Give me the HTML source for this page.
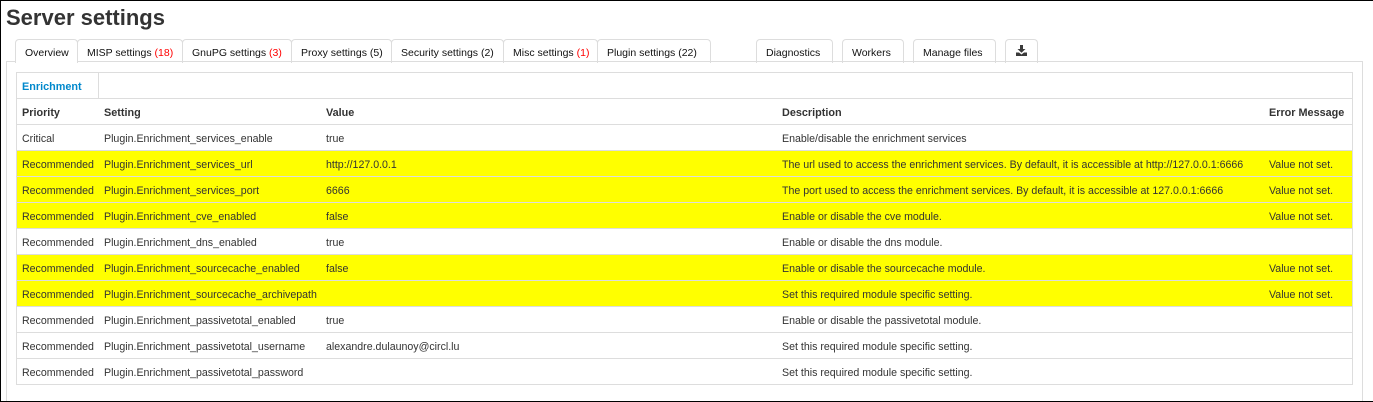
<!DOCTYPE html>
<html><head><meta charset="utf-8"><style>
html,body{margin:0;padding:0;background:#fff}
body{width:1373px;height:402px;position:relative;overflow:hidden;font-family:"Liberation Sans",sans-serif;font-size:10.62px;color:#333}
.a{position:absolute;box-sizing:border-box}
h2{position:absolute;left:6px;top:3px;margin:0;font-size:22px;line-height:30px;font-weight:bold;color:#333;white-space:nowrap}
.tab{position:absolute;top:39px;height:24px;box-sizing:border-box;border:1px solid #ddd;border-bottom:0;border-radius:4px 4px 0 0;text-align:left;padding-left:9px;font-size:10.5px;line-height:26px;white-space:nowrap;color:#111}
.r{color:#f00}
.row{position:absolute;left:17px;width:1335px;height:25px;line-height:28px;white-space:nowrap}
.row span{position:absolute;top:0}
.c1{left:5px}.c2{left:87px}.c3{left:309px}.c4{left:765px}.c5{left:1252px}
.b{font-weight:bold;font-size:10.85px}
.line{position:absolute;left:16px;width:1337px;height:1px;background:#ddd}
</style></head><body>
<div class="a" style="left:0;top:0;width:1373px;height:1px;background:#000"></div>
<div class="a" style="left:0;top:0;width:1px;height:402px;background:#000"></div>
<div class="a" style="left:0;top:401px;width:1373px;height:1px;background:#000"></div>
<h2>Server settings</h2>

<div class="a" style="left:6px;top:61px;width:1357px;height:340px;border:1px solid #ddd;border-bottom:0"></div>

<div class="a" style="left:16px;top:61px;width:61px;height:2px;background:#fff"></div>
<div class="tab" style="left:15px;width:63px">Overview</div>
<div class="tab" style="left:77px;width:106px">MISP settings <span class="r">(18)</span></div>
<div class="tab" style="left:182px;width:110px">GnuPG settings <span class="r">(3)</span></div>
<div class="tab" style="left:291px;width:101px">Proxy settings (5)</div>
<div class="tab" style="left:391px;width:113px">Security settings (2)</div>
<div class="tab" style="left:503px;width:95px">Misc settings <span class="r">(1)</span></div>
<div class="tab" style="left:597px;width:114px">Plugin settings (22)</div>
<div class="tab" style="left:756px;width:77px">Diagnostics</div>
<div class="tab" style="left:842px;width:62px">Workers</div>
<div class="tab" style="left:913px;width:83px">Manage files</div>
<div class="tab" style="left:1005px;width:33px"><svg style="position:absolute;left:10px;top:5px" width="11" height="11" viewBox="0 0 11 11"><path d="M4 0h3v4h2.500L5.500 7.800 1.500 4H4zM0 7.500h3l2.500 2 2.500-2h3V11H0z" fill="#3a3a3a"/></svg></div>

<div class="a" style="left:16px;top:72px;width:1337px;height:313px;border:1px solid #ddd"></div>
<div class="a" style="left:98px;top:72px;width:1px;height:26px;background:#ddd"></div>
<div class="line" style="top:98px"></div>
<div class="line" style="top:124px"></div>
<div class="line" style="top:150px"></div>
<div class="line" style="top:176px"></div>
<div class="line" style="top:202px"></div>
<div class="line" style="top:228px"></div>
<div class="line" style="top:254px"></div>
<div class="line" style="top:280px"></div>
<div class="line" style="top:306px"></div>
<div class="line" style="top:332px"></div>
<div class="line" style="top:358px"></div>

<div class="a b" style="left:22px;top:73px;line-height:28px;color:#0088cc">Enrichment</div>

<div class="row b" style="top:99px"><span class="c1">Priority</span><span class="c2">Setting</span><span class="c3">Value</span><span class="c4">Description</span><span class="c5">Error Message</span></div>

<div class="row" style="top:125px"><span class="c1">Critical</span><span class="c2">Plugin.Enrichment_services_enable</span><span class="c3">true</span><span class="c4">Enable/disable the enrichment services</span></div>

<div class="row" style="top:151px;background:#ff0"><span class="c1">Recommended</span><span class="c2">Plugin.Enrichment_services_url</span><span class="c3">http://127.0.0.1</span><span class="c4">The url used to access the enrichment services. By default, it is accessible at http://127.0.0.1:6666</span><span class="c5">Value not set.</span></div>

<div class="row" style="top:177px;background:#ff0"><span class="c1">Recommended</span><span class="c2">Plugin.Enrichment_services_port</span><span class="c3">6666</span><span class="c4">The port used to access the enrichment services. By default, it is accessible at 127.0.0.1:6666</span><span class="c5">Value not set.</span></div>

<div class="row" style="top:203px;background:#ff0"><span class="c1">Recommended</span><span class="c2">Plugin.Enrichment_cve_enabled</span><span class="c3">false</span><span class="c4">Enable or disable the cve module.</span><span class="c5">Value not set.</span></div>

<div class="row" style="top:229px"><span class="c1">Recommended</span><span class="c2">Plugin.Enrichment_dns_enabled</span><span class="c3">true</span><span class="c4">Enable or disable the dns module.</span></div>

<div class="row" style="top:255px;background:#ff0"><span class="c1">Recommended</span><span class="c2">Plugin.Enrichment_sourcecache_enabled</span><span class="c3">false</span><span class="c4">Enable or disable the sourcecache module.</span><span class="c5">Value not set.</span></div>

<div class="row" style="top:281px;background:#ff0"><span class="c1">Recommended</span><span class="c2">Plugin.Enrichment_sourcecache_archivepath</span><span class="c4">Set this required module specific setting.</span><span class="c5">Value not set.</span></div>

<div class="row" style="top:307px"><span class="c1">Recommended</span><span class="c2">Plugin.Enrichment_passivetotal_enabled</span><span class="c3">true</span><span class="c4">Enable or disable the passivetotal module.</span></div>

<div class="row" style="top:333px"><span class="c1">Recommended</span><span class="c2">Plugin.Enrichment_passivetotal_username</span><span class="c3">alexandre.dulaunoy@circl.lu</span><span class="c4">Set this required module specific setting.</span></div>

<div class="row" style="top:359px"><span class="c1">Recommended</span><span class="c2">Plugin.Enrichment_passivetotal_password</span><span class="c4">Set this required module specific setting.</span></div>
</body></html>
